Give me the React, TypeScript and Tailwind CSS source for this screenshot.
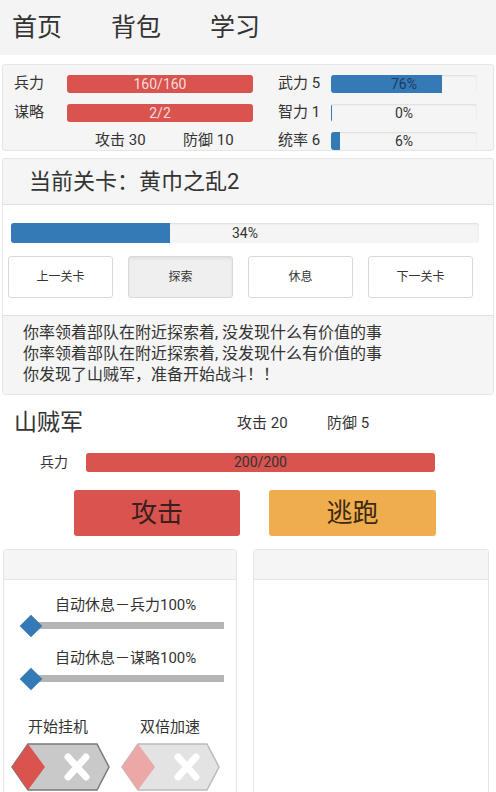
const font = { fontFamily: 'Roboto, "Noto Sans CJK SC", sans-serif' };

const Bar = (props: any) => (
  <div className={`relative overflow-hidden rounded-[3px] bg-[#f5f5f5] shadow-[inset_0_1px_2px_rgba(0,0,0,0.1)] ${props.className}`}>
    <div className={`absolute left-0 top-0 h-full ${props.fill}`} style={{ width: `${props.pct}%` }} />
    <div className={`relative flex h-full items-center justify-center text-[14px] leading-none ${props.text || 'text-[#333]'}`}>
      {props.label}
    </div>
  </div>
);

const Toggle = (props: any) => (
  <svg width="100" height="50" viewBox="0 0 100 50" className={props.faded ? 'opacity-50' : ''}>
    <polygon points="17,1 86,1 98,24 86,47 17,47 1,24" fill="#c9c9c9" stroke="#7a7a7a" strokeWidth="1.5" />
    <polygon points="1,24 17,1 34,24 17,47" fill="#d9534f" />
    <path d="M57 14 L75 34 M75 14 L57 34" stroke="#fff" strokeWidth="7" strokeLinecap="round" />
  </svg>
);

const Slider = (props: any) => (
  <div className="flex flex-col">
    <div className="pl-[51px] text-[15px] leading-[20px] text-[#333]">{props.label}</div>
    <div className="relative h-[24px]">
      <div className="absolute left-[26px] top-[7px] h-[7px] w-[194px] bg-[#b5b5b5]" />
      <div className="absolute left-[19px] top-[3px] h-[16px] w-[16px] rotate-45 bg-[#337ab7]" />
    </div>
  </div>
);

export default function App() {
  return (
    <div className="h-[792px] w-[496px] overflow-hidden bg-white text-[#333]" style={font}>
      <div className="flex h-[55px] items-center gap-[49px] bg-[#f4f4f4] pl-[12px] text-[25px]">
        <span>首页</span>
        <span>背包</span>
        <span>学习</span>
      </div>

      <div className="mx-[2px] mt-[9px] h-[87px] rounded-[3px] border border-[#e6e6e6] bg-[#f5f5f5] pt-[9px] text-[15px]">
        <div className="flex h-[19px] items-center">
          <span className="w-[64px] pl-[11px]">兵力</span>
          <Bar className="h-[18px] w-[186px]" fill="bg-[#d9534f]" pct={100} label="160/160" text="text-[#f6dcdb]" />
          <span className="w-[25px]" />
          <span className="w-[53px] whitespace-nowrap">武力 5</span>
          <Bar className="h-[18px] w-[146px]" fill="bg-[#337ab7]" pct={76} label="76%" text="text-[#1e3a5f]" />
        </div>
        <div className="mt-[10px] flex h-[19px] items-center">
          <span className="w-[64px] pl-[11px]">谋略</span>
          <Bar className="h-[18px] w-[186px]" fill="bg-[#d9534f]" pct={100} label="2/2" text="text-[#f6dcdb]" />
          <span className="w-[25px]" />
          <span className="w-[53px] whitespace-nowrap">智力 1</span>
          <Bar className="h-[18px] w-[146px]" fill="bg-[#337ab7]" pct={0.6} label="0%" />
        </div>
        <div className="mt-[9px] flex h-[19px] items-center">
          <span className="w-[92px]" />
          <span className="w-[88px]">攻击 30</span>
          <span className="w-[95px]">防御 10</span>
          <span className="w-[53px] whitespace-nowrap">统率 6</span>
          <Bar className="h-[18px] w-[146px]" fill="bg-[#337ab7]" pct={6} label="6%" />
        </div>
      </div>

      <div className="mx-[2px] mt-[7px] overflow-hidden rounded-[3px] border border-[#e6e6e6]">
        <div className="flex h-[46px] items-center border-b border-[#e0e0e0] bg-[#f5f5f5] pl-[26px] text-[22px]">
          当前关卡：黄巾之乱2
        </div>
        <div className="bg-white px-[5px] pb-[17px] pt-[18px]">
          <Bar className="ml-[3px] h-[20px] w-[468px]" fill="bg-[#337ab7]" pct={34} label="34%" />
          <div className="mt-[13px] flex gap-[15px]">
            {['上一关卡', '探索', '休息', '下一关卡'].map((t, i) => (
              <div
                key={t}
                className={`flex h-[42px] w-[105px] items-center justify-center rounded-[3px] border border-[#d9d9d9] text-[12px] ${i === 1 ? 'bg-[#efefef] shadow-[inset_0_2px_3px_rgba(0,0,0,0.06)]' : 'bg-white'}`}
              >
                {t}
              </div>
            ))}
          </div>
        </div>
        <div className="border-t border-[#e0e0e0] bg-[#f5f5f5] pb-[9px] pl-[20px] pt-[6px] text-[16px] leading-[21px]">
          <div>你率领着部队在附近探索着, 没发现什么有价值的事</div>
          <div>你率领着部队在附近探索着, 没发现什么有价值的事</div>
          <div>你发现了山贼军，准备开始战斗！！</div>
        </div>
      </div>

      <div className="mt-[13px] flex h-[30px] items-center pl-[14px]">
        <span className="w-[223px] text-[23px]">山贼军</span>
        <span className="w-[90px] text-[15px]">攻击 20</span>
        <span className="text-[15px]">防御 5</span>
      </div>
      <div className="mt-[14px] flex h-[20px] items-center pl-[40px]">
        <span className="w-[46px] text-[14px]">兵力</span>
        <Bar className="h-[19px] w-[349px]" fill="bg-[#d9534f]" pct={100} label="200/200" />
      </div>

      <div className="mt-[18px] flex gap-[29px] pl-[74px]">
        <div className="flex h-[46px] w-[166px] items-center justify-center rounded-[3px] bg-[#d9534f] text-[26px] text-[#3a1f1e]">
          攻击
        </div>
        <div className="flex h-[46px] w-[167px] items-center justify-center rounded-[3px] bg-[#f0ad4e] text-[26px] text-[#3a2a12]">
          逃跑
        </div>
      </div>

      <div className="mt-[13px] flex gap-[16px] pl-[3px]">
        <div className="h-[260px] w-[234px] rounded-t-[3px] border border-[#e6e6e6]">
          <div className="h-[30px] border-b border-[#e6e6e6] bg-[#f5f5f5]" />
          <div className="pt-[15px]">
            <Slider label="自动休息－兵力100%" />
            <div className="mt-[9px]">
              <Slider label="自动休息－谋略100%" />
            </div>
            <div className="mt-[25px] flex gap-[52px] pl-[24px] text-[15px] leading-[20px]">
              <span>开始挂机</span>
              <span>双倍加速</span>
            </div>
            <div className="mt-[6px] flex gap-[10px] pl-[7px]">
              <Toggle />
              <Toggle faded />
            </div>
          </div>
        </div>
        <div className="h-[260px] w-[236px] rounded-t-[3px] border border-[#e6e6e6]">
          <div className="h-[30px] border-b border-[#e6e6e6] bg-[#f5f5f5]" />
        </div>
      </div>
    </div>
  );
}
